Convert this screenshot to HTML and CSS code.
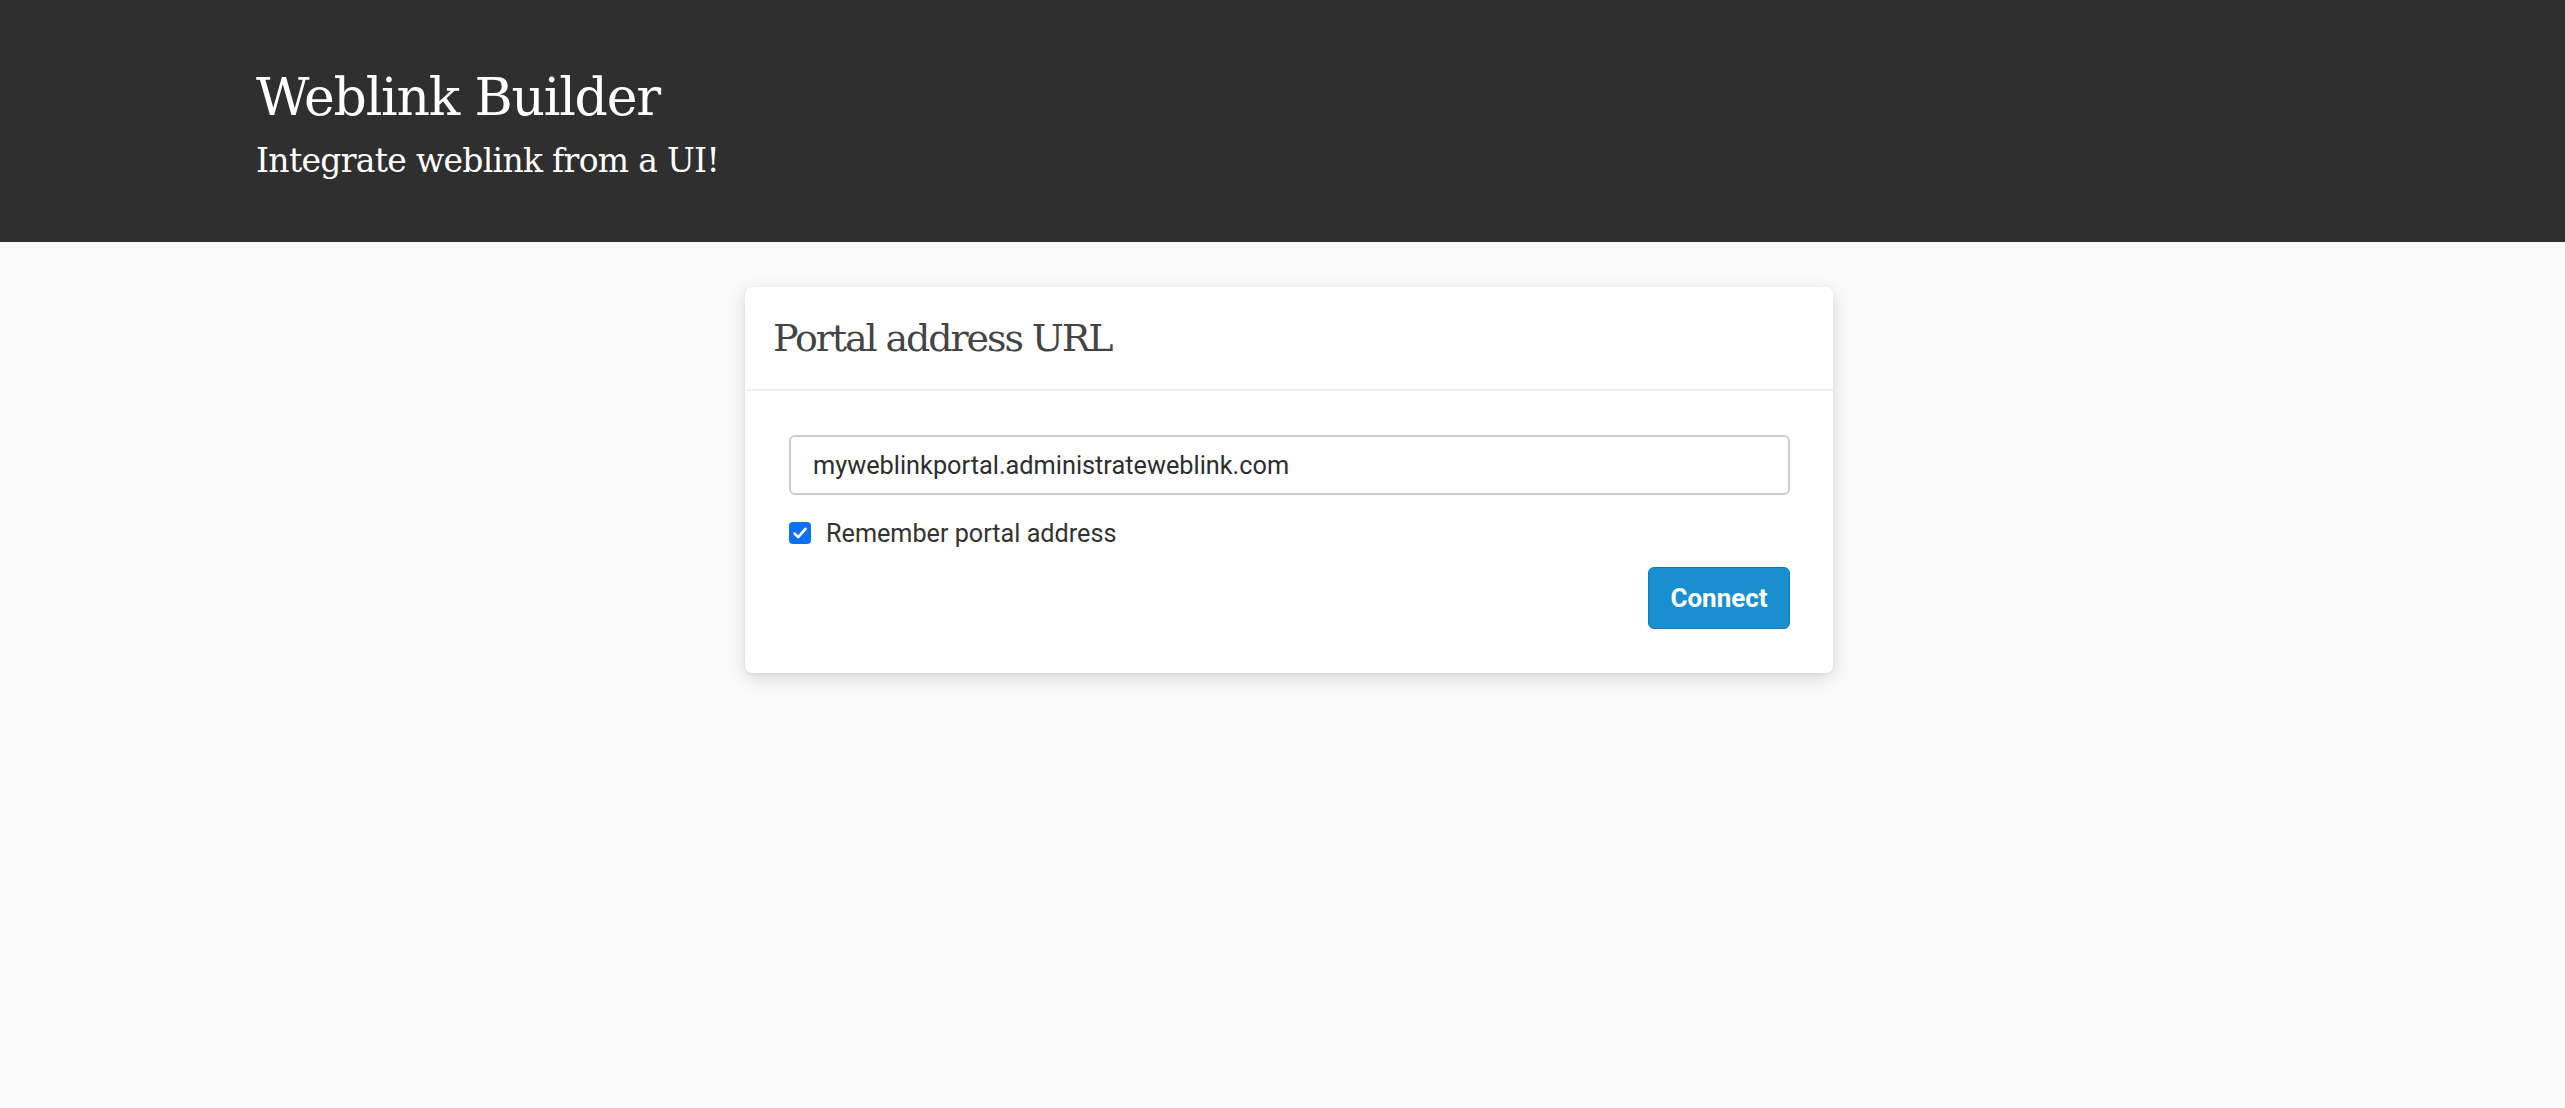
FILE: index.html
```html
<!DOCTYPE html>
<html lang="en">
<head>
<meta charset="utf-8">
<title>Weblink Builder</title>
<link rel="stylesheet" href="styles.css">
</head>
<body>
<header class="masthead">
  <div class="masthead-inner">
    <h1 class="masthead-title">Weblink Builder</h1>
    <p class="masthead-sub">Integrate weblink from a UI!</p>
  </div>
</header>
<main class="main">
  <section class="card">
    <div class="card-header">
      <h2 class="card-title">Portal address URL</h2>
    </div>
    <div class="card-body">
      <input class="text-input" type="text" value="myweblinkportal.administrateweblink.com">
      <label class="check-row">
        <span class="check-box">
          <svg viewBox="0 0 22 22" width="22" height="22"><path d="M5.5 11.5 L9.2 15.2 L16.5 6.8" fill="none" stroke="#fff" stroke-width="2.6" stroke-linecap="round" stroke-linejoin="round"/></svg>
        </span>
        <span class="check-label">Remember portal address</span>
      </label>
      <div class="actions">
        <button class="btn-primary" type="button">Connect</button>
      </div>
    </div>
  </section>
</main>
</body>
</html>
```

FILE: styles.css
```css
html, body {
  margin: 0;
  padding: 0;
}
body {
  background: #fafafa;
  font-family: Roboto, "Liberation Sans", Arial, sans-serif;
  color: #333;
  min-height: 1108px;
}
.masthead {
  background: #2f2f2f;
  height: 242px;
  box-sizing: border-box;
  padding-top: 64px;
}
.masthead-inner {
  padding-left: 256px;
}
.masthead-title {
  margin: 0;
  font-family: "DejaVu Serif", "Liberation Serif", serif;
  font-weight: normal;
  font-size: 52px;
  line-height: 66px;
  letter-spacing: -1.2px;
  color: #fff;
}
.masthead-sub {
  margin: 0;
  margin-top: 9px;
  font-family: "DejaVu Serif", "Liberation Serif", serif;
  font-size: 33px;
  line-height: 44px;
  letter-spacing: -0.7px;
  color: #fff;
}
.main {
  display: flex;
  justify-content: center;
  padding-top: 45px;
  padding-left: 13px;
}
.card {
  width: 1088px;
  background: #fff;
  border-radius: 7px;
  box-shadow: 0 5px 18px rgba(0, 0, 0, 0.14), 0 1px 3px rgba(0, 0, 0, 0.06);
}
.card-header {
  height: 104px;
  box-sizing: border-box;
  border-bottom: 2px solid #efefef;
  padding: 25px 28px 0;
}
.card-title {
  margin: 0;
  font-family: "DejaVu Serif", "Liberation Serif", serif;
  font-weight: normal;
  font-size: 38px;
  line-height: 52px;
  letter-spacing: -2.1px;
  color: #444;
}
.card-body {
  padding: 44px 43px 44px 44px;
}
.text-input {
  display: block;
  width: 100%;
  box-sizing: border-box;
  height: 60px;
  border: 2px solid #cdcdcd;
  border-radius: 6px;
  padding: 0 22px;
  font-family: Roboto, "Liberation Sans", sans-serif;
  font-size: 25.3px;
  color: #2e2e2e;
  background: #fff;
  outline: none;
}
.check-row {
  display: flex;
  align-items: center;
  gap: 15px;
  margin-top: 26px;
  height: 24px;
}
.check-box {
  width: 22px;
  height: 22px;
  border-radius: 4px;
  background: #0b70f2;
  display: flex;
}
.check-label {
  font-size: 25.2px;
  color: #333;
}
.actions {
  display: flex;
  justify-content: flex-end;
  margin-top: 22px;
}
.btn-primary {
  width: 142px;
  height: 62px;
  background: #1a8fcf;
  border: 1px solid #1479b2;
  border-radius: 6px;
  color: #fff;
  font-family: Roboto, "Liberation Sans", sans-serif;
  font-weight: bold;
  font-size: 26px;
  padding: 0;
}
```
